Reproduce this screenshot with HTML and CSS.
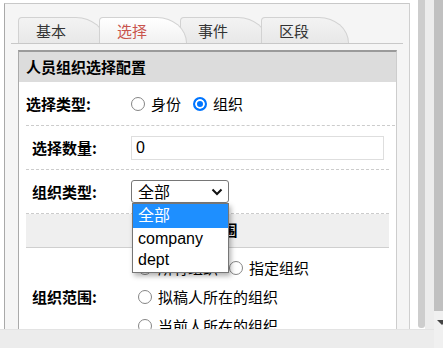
FILE: index.html
```html
<!DOCTYPE html>
<html lang="zh-CN">
<head>
    <meta charset="UTF-8">
    <title>人员组织选择配置</title>
    <link rel="stylesheet" href="styles.css">
</head>
<body>
    <div class="screen">
        <div class="main">
            <div class="view">
                <div class="frame">
                    <div class="tabbar">
                        <div class="tab">基本</div>
                        <div class="tab active">选择</div>
                        <div class="tab">事件</div>
                        <div class="tab">区段</div>
                    </div>

                    <div class="box">
                        <div class="box-title">人员组织选择配置</div>

                        <div class="row-type">
                            <div class="label">选择类型:</div>
                            <span class="radio"></span><span class="opt">身份</span>
                            <span class="radio checked"></span><span class="opt">组织</span>
                        </div>

                        <div class="sub">
                            <div class="row">
                                <div class="label">选择数量:</div>
                                <div class="input">0</div>
                            </div>
                            <div class="row">
                                <div class="label">组织类型:</div>
                                <div class="select">
                                    <span>全部</span>
                                    <svg class="chevron" width="12" height="8" viewBox="0 0 12 8">
                                        <polyline points="1.5,1.5 6,6 10.5,1.5" fill="none" stroke="#111" stroke-width="2"/>
                                    </svg>
                                    <div class="popup">
                                        <div class="item on">全部</div>
                                        <div class="item">company</div>
                                        <div class="item">dept</div>
                                    </div>
                                </div>
                            </div>
                            <div class="sec-head">组织范围</div>
                            <div class="row-range">
                                <div class="label">组织范围:</div>
                                <div class="opts">
                                    <div class="line">
                                        <span class="radio"></span><span class="opt wide">所有组织</span>
                                        <span class="radio"></span><span class="opt">指定组织</span>
                                    </div>
                                    <div class="line">
                                        <span class="radio"></span><span class="opt">拟稿人所在的组织</span>
                                    </div>
                                    <div class="line">
                                        <span class="radio"></span><span class="opt">当前人所在的组织</span>
                                    </div>
                                </div>
                            </div>
                        </div>
                    </div>
                </div>
                <div class="gutter"></div>
                <div class="vbar-in"></div>
                <div class="vtrack"></div>
            </div>
            <div class="hbar"></div>
        </div>
        <div class="vbar-out">
            <div class="thumb"></div>
            <div class="arrow"></div>
        </div>
    </div>
</body>
</html>
```

FILE: styles.css
```css
* {
    box-sizing: border-box;
}
body {
    margin: 0;
    background: #fff;
    font-family: "Noto Sans CJK SC", "Liberation Sans", sans-serif;
    font-size: 15px;
    color: #000;
    overflow: hidden;
}
.screen {
    width: 443px;
    height: 348px;
    display: flex;
    overflow: hidden;
}
.main {
    width: 434px;
    display: flex;
    flex-direction: column;
}
.view {
    height: 329px;
    display: flex;
}
.frame {
    margin: 3px 0 0 4px;
    width: 406px;
    height: 326px;
    background: #f5f5f5;
    border-left: 1px solid #a9a9a9;
    border-top: 1px solid #c8c8c8;
    border-right: 1px solid #cfcfcf;
    overflow: hidden;
}
.gutter {
    width: 8px;
}
.vbar-in {
    width: 7px;
    height: 328px;
    background: #cdcdcd;
    border-radius: 0 0 3px 3px;
}
.vtrack {
    width: 9px;
    background: #ececec;
}
.hbar {
    flex: 1;
    background: #ececec;
    border-top: 1px solid #e3e3e3;
}
.vbar-out {
    width: 9px;
    background: #f0f0f0;
}
.vbar-out .thumb {
    height: 311px;
    background: #c0c0c0;
}
.arrow {
    margin: 9px 0 0 3px;
    width: 0;
    height: 0;
    border-left: 5px solid transparent;
    border-right: 5px solid transparent;
    border-top: 5px solid #444;
}

/* tabs */
.tabbar {
    margin: 13px 6px 0 6px;
    padding-left: 7px;
    height: 27px;
    border-bottom: 1px solid #c8c8c8;
    display: flex;
}
.tab {
    position: relative;
    width: 88px;
    height: 26px;
    margin-right: -7px;
    padding-left: 17px;
    line-height: 25px;
    color: #333;
    background: linear-gradient(#f3f3f3, #e8e8e8);
    border: 1px solid #d2d2d2;
    border-bottom: none;
    border-radius: 4px 30px 0 0 / 4px 26px 0 0;
}
.tab.active {
    z-index: 2;
    color: #c9534c;
    background: linear-gradient(#ffffff, #f1f1f1);
}

/* form box */
.box {
    margin: 6px 0 0 13px;
    width: 379px;
    height: 300px;
    background: #fff;
    border-top: 2px solid #9a9a9a;
    border-left: 1px solid #aaa;
    border-right: 1px solid #cdcdcd;
}
.box-title {
    height: 30px;
    line-height: 30px;
    padding-left: 7px;
    background: #dcdcdc;
    font-weight: bold;
}
.label {
    font-weight: bold;
    flex: none;
}
.row-type {
    margin: 0 1px 0 7px;
    height: 44px;
    display: flex;
    align-items: center;
    border-bottom: 1px dashed #ccc;
}
.row-type .label {
    width: 105px;
}
.radio {
    flex: none;
    display: inline-block;
    width: 14px;
    height: 14px;
    border: 1px solid #858585;
    border-radius: 50%;
    margin-right: 6px;
}
.radio.checked {
    border: 2px solid #0075ff;
    background: #0075ff;
    box-shadow: inset 0 0 0 2px #fff;
}
.opt {
    margin-right: 12px;
}
.opt.wide {
    margin-right: 11px;
}

.sub {
    margin-left: 7px;
    width: 363px;
}
.row {
    height: 44px;
    display: flex;
    align-items: center;
    border-bottom: 1px dashed #ccc;
}
.row .label,
.row-range .label {
    width: 105px;
    padding-left: 6px;
}
.input {
    width: 253px;
    height: 24px;
    border: 1px solid #dedede;
    padding-left: 4px;
    font-family: "Liberation Sans", sans-serif;
    font-size: 16px;
    line-height: 22px;
}
.select {
    position: relative;
    width: 98px;
    height: 23px;
    border: 1px solid #767676;
    border-radius: 3px;
    padding-left: 6px;
    font-size: 16px;
    line-height: 21px;
    display: flex;
    align-items: center;
    justify-content: space-between;
}
.chevron {
    margin-right: 5px;
}
.popup {
    position: absolute;
    top: 22px;
    left: 0;
    width: 97px;
    padding-bottom: 2px;
    background: #fff;
    border: 1px solid #767676;
    box-shadow: 2px 3px 5px rgba(0, 0, 0, 0.3);
    z-index: 5;
}
.item {
    height: 21px;
    line-height: 21px;
    padding-left: 5px;
    font-family: "Liberation Sans", "Noto Sans CJK SC", sans-serif;
    font-size: 16px;
}
.item.on {
    height: 24px;
    line-height: 24px;
    background: #1e8fff;
    color: #fff;
}
.sec-head {
    height: 34px;
    line-height: 32px;
    text-align: center;
    background: #efefef;
    border-bottom: 1px solid #cfcfcf;
    font-weight: bold;
}
.row-range {
    display: flex;
    align-items: center;
}
.opts {
    padding: 5px 0 5px 7px;
}
.line {
    height: 29px;
    display: flex;
    align-items: center;
}
```
